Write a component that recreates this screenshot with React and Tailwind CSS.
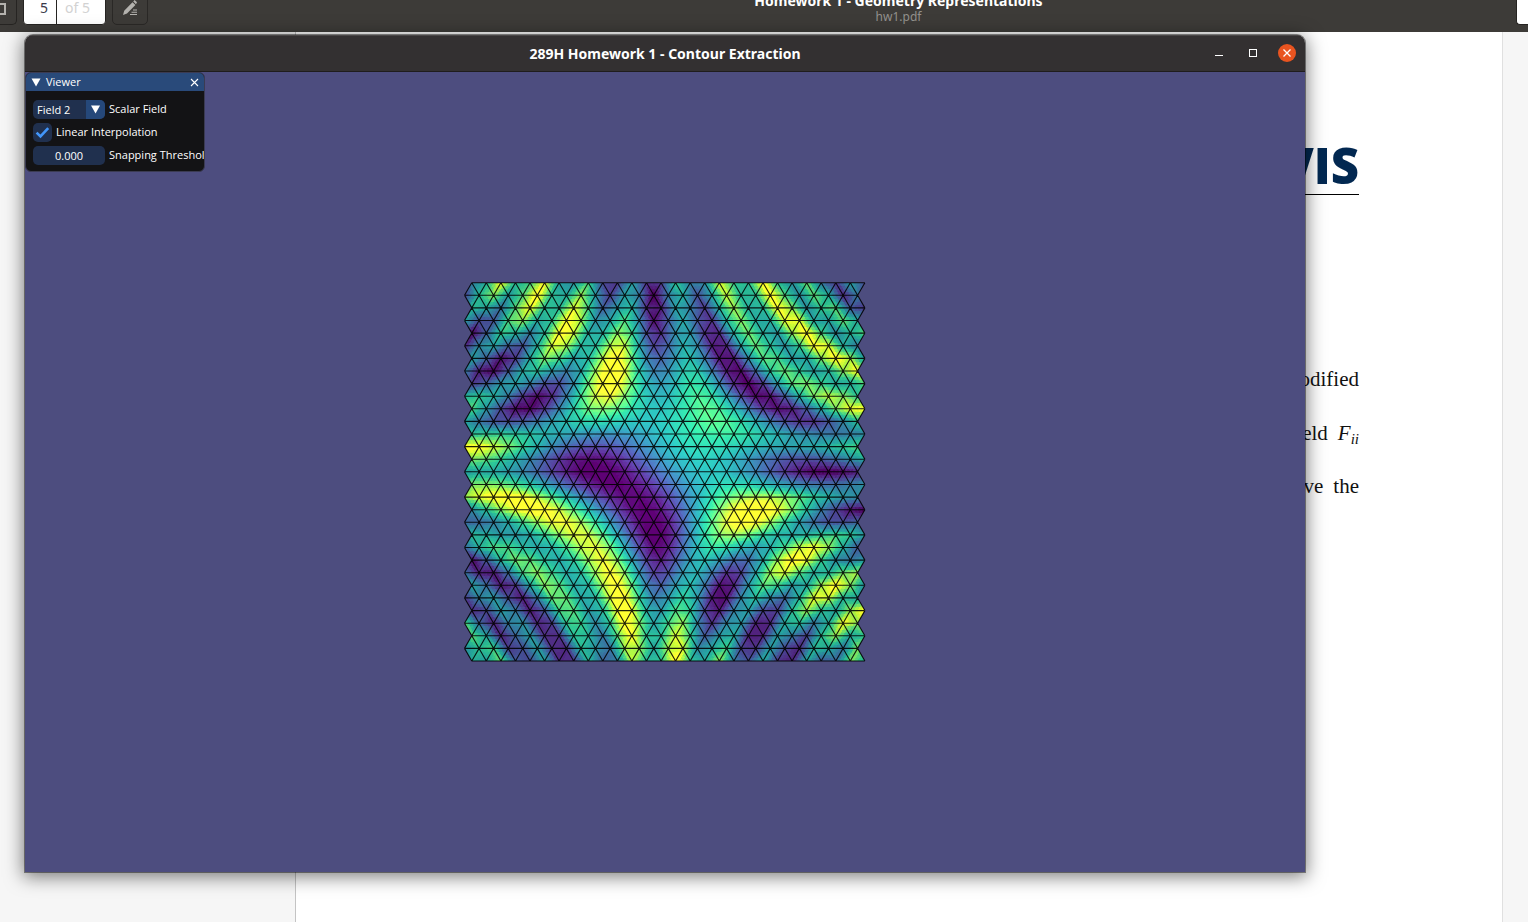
import React, { useMemo } from "react";

const EDGE = 14.56;
const ROW_H = 12.61;
const ROWS = 30;
const COLS = 27;
const UNIT = 36.4;
const ORIGIN_X = 190;
const MID_X = 200;
const MID_Y = (ROWS * ROW_H) / 2;
const SUBDIV = 4;

const RAMP = [
  [68, 1, 84],
  [71, 44, 122],
  [59, 81, 139],
  [44, 113, 142],
  [33, 144, 141],
  [39, 173, 129],
  [92, 200, 99],
  [170, 220, 50],
  [253, 231, 37],
];

function rampColor(t, gain) {
  const p = Math.min(Math.max(t, 0), 1) * (RAMP.length - 1);
  const i = Math.min(Math.floor(p), RAMP.length - 2);
  const f = p - i;
  const c = RAMP[i].map((v, k) =>
    Math.min(255, Math.round((v + (RAMP[i + 1][k] - v) * f) * gain))
  );
  return `rgb(${c[0]},${c[1]},${c[2]})`;
}

// Scalar field 2: sin(x + y) - cos(x * y), scaled to 0..1
function field(px, py) {
  const x = (px - ORIGIN_X) / UNIT;
  const y = (MID_Y - py) / UNIT;
  return (Math.sin(x + y) - Math.cos(x * y) + 2) / 4;
}

function vertex(row, col) {
  const x = col * EDGE + (row % 2 === 0 ? EDGE / 2 : 0) + 0.5;
  const y = row * ROW_H + 0.7;
  return { x, y, v: field(x, y) };
}

function mix(a, b, c, i, j) {
  const u = i / SUBDIV;
  const w = j / SUBDIV;
  const t = 1 - u - w;
  return {
    x: a.x * t + b.x * u + c.x * w,
    y: a.y * t + b.y * u + c.y * w,
    v: a.v * t + b.v * u + c.v * w,
  };
}

const line = (a, b) =>
  `M${a.x.toFixed(1)} ${a.y.toFixed(1)}L${b.x.toFixed(1)} ${b.y.toFixed(1)}`;

function buildMesh() {
  const cells = new Map();
  let wire = "";
  const addCell = (p, q, r) => {
    const v = (p.v + q.v + r.v) / 3;
    const cx = (p.x + q.x + r.x) / 3 - MID_X;
    const cy = (p.y + q.y + r.y) / 3 - MID_Y;
    const light = 1.08 + 0.36 * Math.exp(-(cx * cx + cy * cy) / 20000);
    const color = rampColor(
      Math.round((v * 1.06 - 0.03) * 60) / 60,
      Math.round(light * 40) / 40
    );
    const d = `${line(p, q)}L${r.x.toFixed(1)} ${r.y.toFixed(1)}Z`;
    cells.set(color, (cells.get(color) || "") + d);
  };
  const addTriangle = (a, b, c) => {
    for (let i = 0; i < SUBDIV; i++) {
      for (let j = 0; j < SUBDIV - i; j++) {
        addCell(mix(a, b, c, i, j), mix(a, b, c, i + 1, j), mix(a, b, c, i, j + 1));
        if (i + j < SUBDIV - 1) {
          addCell(mix(a, b, c, i + 1, j), mix(a, b, c, i + 1, j + 1), mix(a, b, c, i, j + 1));
        }
      }
    }
  };
  for (let r = 0; r < ROWS; r++) {
    for (let c = 0; c <= COLS; c++) {
      wire += line(vertex(r, c), vertex(r + 1, c));
      if (c === COLS) break;
      const t0 = vertex(r, c);
      const t1 = vertex(r, c + 1);
      const b0 = vertex(r + 1, c);
      const b1 = vertex(r + 1, c + 1);
      if (r % 2 === 0) {
        addTriangle(b0, t0, b1);
        addTriangle(t0, b1, t1);
        wire += line(t0, b1);
      } else {
        addTriangle(t0, b0, t1);
        addTriangle(b0, t1, b1);
        wire += line(b0, t1);
      }
    }
  }
  for (let r = 0; r <= ROWS; r++) {
    wire += line(vertex(r, 0), vertex(r, COLS));
  }
  return { cells: [...cells.entries()], wire };
}

function Mesh() {
  const { cells, wire } = useMemo(buildMesh, []);
  return (
    <svg width="402" height="380" viewBox="0 0 402 380" role="img" aria-label="Triangle mesh">
      <g shapeRendering="crispEdges">
        {cells.map(([color, d]) => (
          <path key={color} d={d} fill={color} />
        ))}
      </g>
      <path d={wire} fill="none" stroke="#000" strokeWidth="1.1" strokeOpacity="0.88" strokeLinejoin="round" />
    </svg>
  );
}

function ViewerHeader() {
  return (
    <header className="flex h-[18px] items-center bg-[#294a7a] pr-[5px] pl-[5px]">
      <button type="button" aria-label="Collapse" className="flex">
        <svg width="10" height="9" viewBox="0 0 10 9">
          <path d="M0.5 0.5H9.5L5 8.5Z" fill="#fff" />
        </svg>
      </button>
      <h2 className="ml-[5px] flex-1 leading-4">Viewer</h2>
      <button type="button" aria-label="Close viewer" className="flex">
        <svg width="9" height="9" viewBox="0 0 9 9" stroke="#fff" strokeWidth="1.1">
          <path d="M1 1L8 8M8 1L1 8" />
        </svg>
      </button>
    </header>
  );
}

function ViewerPanel() {
  return (
    <section className="absolute top-0 left-0 w-[180px] overflow-hidden rounded-[6px] border border-[#3b3b52] bg-[#131315] font-['Open_Sans',sans-serif] text-[11px] text-white">
      <ViewerHeader />
      <div className="flex flex-col gap-1 pt-[9px] pb-[6px] pl-[7px]">
        <div className="flex items-center gap-1">
          <div className="relative flex">
            <select
              id="scalar-field"
              defaultValue="Field 2"
              className="h-[19px] w-[72px] appearance-none rounded-[5px] bg-[#20304e] pl-1 leading-[18px] outline-none"
            >
              <option>Field 1</option>
              <option>Field 2</option>
            </select>
            <span className="pointer-events-none absolute inset-y-0 right-0 flex w-[19px] items-center justify-center rounded-r-[5px] bg-[#25487a]">
              <svg width="9" height="9" viewBox="0 0 9 9">
                <path d="M0 0.5H9L4.5 8.5Z" fill="#fff" />
              </svg>
            </span>
          </div>
          <label htmlFor="scalar-field" className="whitespace-nowrap">Scalar Field</label>
        </div>
        <div className="flex items-center gap-1">
          <div className="relative flex">
            <input
              id="linear"
              type="checkbox"
              defaultChecked
              className="peer size-[19px] appearance-none rounded-[5px] bg-[#20304e]"
            />
            <svg className="pointer-events-none absolute inset-0 hidden peer-checked:block" width="19" height="19" viewBox="0 0 19 19">
              <path d="M3.6 9.6L7.5 13.5L15.2 5.2" fill="none" stroke="#4296fa" strokeWidth="2.6" />
            </svg>
          </div>
          <label htmlFor="linear" className="whitespace-nowrap">Linear Interpolation</label>
        </div>
        <div className="flex items-center gap-1 overflow-hidden">
          <input
            id="snapping"
            type="text"
            defaultValue="0.000"
            className="h-[19px] w-[72px] shrink-0 rounded-[5px] bg-[#20304e] pb-px text-center outline-none"
          />
          <label htmlFor="snapping" className="min-w-0 overflow-hidden whitespace-nowrap">Snapping Threshold</label>
        </div>
      </div>
    </section>
  );
}

function ViewerWindow() {
  return (
    <main className="absolute top-[35px] left-[25px] w-[1280px] overflow-hidden rounded-t-lg shadow-[0_0_0_1px_rgba(0,0,0,0.42),0_3px_18px_2px_rgba(0,0,0,0.5)]">
      <div className="grid h-[37px] grid-cols-[1fr_auto_1fr] items-center border-t border-b border-t-[#4a4747] border-b-[#1f1d1d] bg-[#333031] px-[9px] font-['Noto_Sans',sans-serif]">
        <span />
        <h1 className="text-[14px] leading-5 font-bold text-white">289H Homework 1 - Contour Extraction</h1>
        <div className="flex items-center justify-end gap-4 pb-[2px]">
          <button type="button" aria-label="Minimize" className="flex size-[18px] items-center justify-center">
            <svg width="8" height="8" viewBox="0 0 8 8">
              <path d="M0 6.5H8" stroke="#fff" />
            </svg>
          </button>
          <button type="button" aria-label="Maximize" className="flex size-[18px] items-center justify-center">
            <svg width="8" height="8" viewBox="0 0 8 8">
              <rect x="0.5" y="0.5" width="7" height="7" fill="none" stroke="#fff" />
            </svg>
          </button>
          <button type="button" aria-label="Close" className="flex size-[18px] items-center justify-center rounded-full bg-[#e95420]">
            <svg width="10" height="10" viewBox="0 0 10 10">
              <path d="M1.5 1.5L8.5 8.5M8.5 1.5L1.5 8.5" stroke="#fff" strokeWidth="1.3" />
            </svg>
          </button>
        </div>
      </div>
      <div className="relative flex h-[800px] items-center justify-center bg-[#4d4d7f]">
        <ViewerPanel />
        <Mesh />
      </div>
    </main>
  );
}

function Toolbar() {
  return (
    <header className="flex h-8 shrink-0 items-end overflow-hidden bg-[#3d3b38] font-['Noto_Sans',sans-serif]">
      <div className="flex w-[281px] shrink-0 items-end pb-[7px]">
        <button type="button" aria-label="Side pane" className="h-[34px] w-[17px] rounded-br-[5px] border-r border-b border-[#262422]">
          <svg className="mt-[3px]" width="7" height="13" viewBox="0 0 7 13">
            <path d="M0 1H5V11H0" fill="none" stroke="#b4b2ae" strokeWidth="2" />
          </svg>
        </button>
        <div className="ml-[6px] flex h-[34px] overflow-hidden rounded-[4px] border border-[#262422] bg-white text-[14px]">
          <input
            aria-label="Page"
            defaultValue="5"
            className="w-[33px] border-r border-[#262422] pr-2 pb-px text-right text-[#3a3a4a] outline-none"
          />
          <span className="flex w-12 items-center pb-px pl-2 text-[#d2d2d2]">of 5</span>
        </div>
        <button type="button" aria-label="Annotate" className="ml-[6px] flex h-[34px] w-9 items-center justify-center rounded-[5px] border border-[#2a2826]">
          <svg width="16" height="16" viewBox="0 0 16 16" fill="#b4b2ae">
            <path d="M1 15L2.2 10.8L10.5 2.2L13.4 5L5 13.5Z M11.2 1.5L12.6 0L15 2.2L14 4.2Z" />
            <path d="M11 9.5H15V10.5H11ZM9.5 11.7H15V12.7H9.5ZM8 14H15V15H8Z" />
          </svg>
        </button>
      </div>
      <div className="flex flex-1 flex-col items-center pb-[7px]">
        <p className="text-[14px] leading-4 font-bold text-white">Homework 1 - Geometry Representations</p>
        <p className="text-[12px] leading-4 text-[#93918d]">hw1.pdf</p>
      </div>
      <button type="button" aria-label="Zoom" className="mb-[7px] h-[34px] w-3 rounded-bl-[4px] border-b border-l border-[#262422] bg-white" />
    </header>
  );
}

function DocumentPage() {
  return (
    <div className="flex-1 bg-[#f6f6f6] pr-[25px] pl-[295px]">
      <article className="flex h-full flex-col items-end border-r border-l border-r-[#e0e0e0] border-l-[#c4c4c4] bg-white pt-[105px] pr-[143px] font-['Liberation_Serif',serif] text-[21px] leading-6 text-[#111]">
        <div className="border-b border-black font-['Open_Sans',sans-serif] text-[49px] leading-[57px] font-extrabold text-[#022851]">
          DAVIS
        </div>
        <p className="mt-[172px]">modified</p>
        <p className="mt-[30px] flex gap-[10px]">
          <span>field</span>
          <span className="italic">
            F<sub className="text-[15px]">ii</sub>
          </span>
        </p>
        <p className="mt-[29px] flex gap-[10px]">
          <span>have</span>
          <span>the</span>
        </p>
      </article>
    </div>
  );
}

export default function App() {
  return (
    <div className="relative flex h-screen flex-col overflow-hidden">
      <Toolbar />
      <DocumentPage />
      <ViewerWindow />
    </div>
  );
}
